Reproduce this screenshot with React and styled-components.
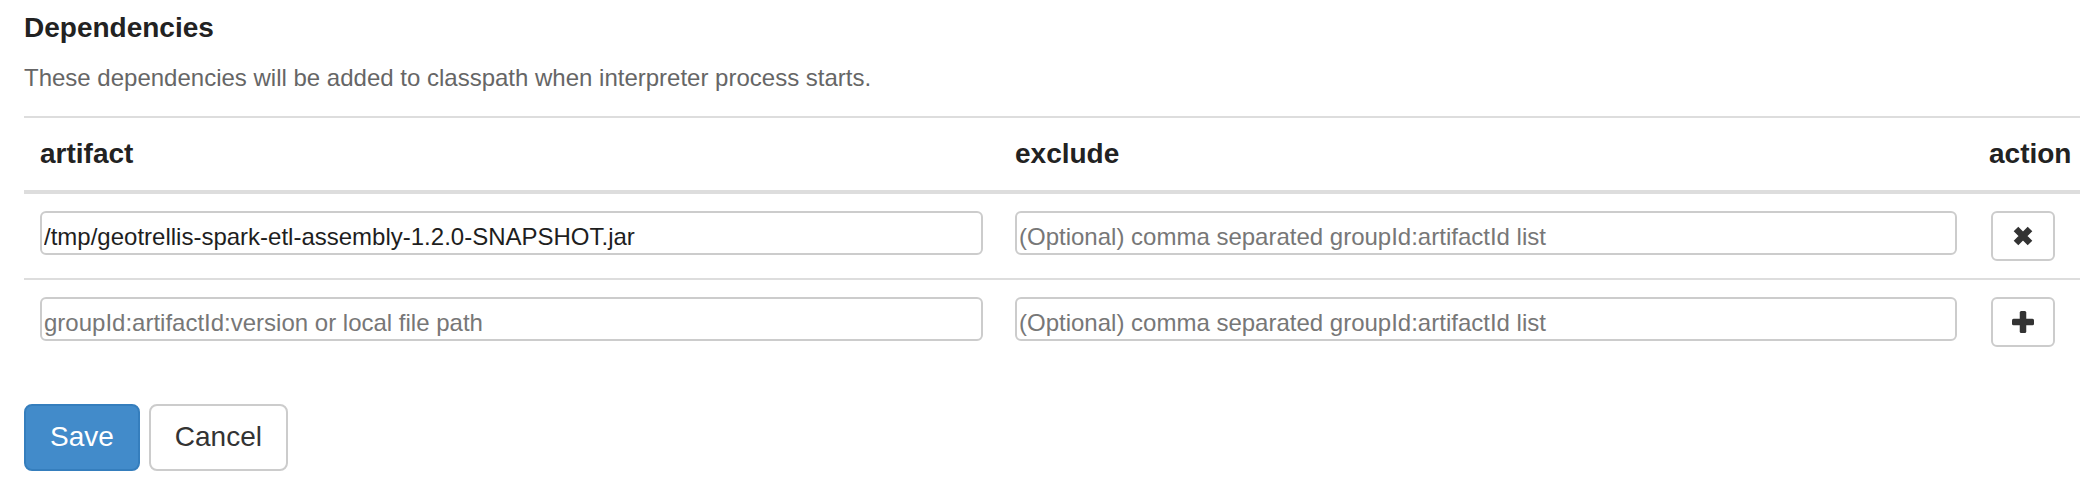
import React from 'react';
import styled, { createGlobalStyle } from 'styled-components';

const GlobalStyle = createGlobalStyle`
    body {
        margin: 0;
        overflow: hidden;
        background: #fff;
        font-family: "Liberation Sans", Helvetica, Arial, sans-serif;
        color: #333;
    }
`;

const Page = styled.div`
    padding: 13px 0 0 24px;
`;

const Title = styled.h5`
    margin: 0;
    font-size: 28px;
    font-weight: bold;
    line-height: 1.1;
    color: #222;
`;

const Description = styled.p`
    margin: 17px 0 0;
    font-size: 24px;
    line-height: 34px;
    color: #666;
`;

const Table = styled.div`
    display: grid;
    grid-template-columns: 975px 974px 114px;
    width: max-content;
    margin-top: 21px;
    border-top: 2px solid #ddd;
`;

const HeadCell = styled.div`
    padding: 16px;
    font-size: 28px;
    font-weight: bold;
    line-height: 40px;
    color: #222;
    border-bottom: 4px solid #ddd;
`;

const Cell = styled.div`
    display: flex;
    align-items: flex-start;
    padding: 17px 16px;
    border-top: ${(p) => (p.first ? 'none' : '2px solid #ddd')};
`;

const Input = styled.input`
    box-sizing: border-box;
    width: 100%;
    height: 44px;
    padding: 9px 2px 0;
    border: 2px solid #ccc;
    border-radius: 6px;
    font-family: inherit;
    font-size: 24px;
    color: #1e1e1e;
    background: #fff;
    outline: none;
    &::placeholder {
        color: #777;
    }
`;

const IconButton = styled.button`
    box-sizing: border-box;
    display: flex;
    align-items: center;
    justify-content: center;
    width: 64px;
    height: 50px;
    margin-left: 2px;
    padding: 0;
    border: 2px solid #ccc;
    border-radius: 6px;
    background: #fff;
    color: #333;
`;

const Footer = styled.div`
    display: flex;
    gap: 9px;
    margin-top: 40px;
`;

const Button = styled.button`
    box-sizing: border-box;
    height: 67px;
    padding: 0 24px;
    border: 2px solid ${(p) => (p.primary ? '#357ebd' : '#ccc')};
    border-radius: 8px;
    background: ${(p) => (p.primary ? '#428bca' : '#fff')};
    color: ${(p) => (p.primary ? '#fff' : '#333')};
    font-family: inherit;
    font-size: 28px;
    line-height: 40px;
`;

const RemoveIcon = () => (
    <svg width="20" height="20" viewBox="0 0 20 20">
        <path d="M3 3 L17 17 M17 3 L3 17" stroke="#333" strokeWidth="6.5" fill="none" />
    </svg>
);

const PlusIcon = () => (
    <svg width="22" height="22" viewBox="0 0 22 22">
        <rect x="0" y="7.75" width="22" height="6.5" rx="1.5" fill="#333" />
        <rect x="7.75" y="0" width="6.5" height="22" rx="1.5" fill="#333" />
    </svg>
);

const deps = [
    { artifact: '/tmp/geotrellis-spark-etl-assembly-1.2.0-SNAPSHOT.jar', exclude: '' },
];

const App = () => {
    return (
        <>
        <GlobalStyle />
        <Page>
            <Title>Dependencies</Title>
            <Description>These dependencies will be added to classpath when interpreter process starts.</Description>
            <Table>
                <HeadCell>artifact</HeadCell>
                <HeadCell>exclude</HeadCell>
                <HeadCell>action</HeadCell>
                {deps.map((dep, i) => (
                    <React.Fragment key={i}>
                        <Cell first={i === 0}>
                            <Input defaultValue={dep.artifact} />
                        </Cell>
                        <Cell first={i === 0}>
                            <Input defaultValue={dep.exclude} placeholder="(Optional) comma separated groupId:artifactId list" />
                        </Cell>
                        <Cell first={i === 0}>
                            <IconButton><RemoveIcon /></IconButton>
                        </Cell>
                    </React.Fragment>
                ))}
                <Cell>
                    <Input placeholder="groupId:artifactId:version or local file path" />
                </Cell>
                <Cell>
                    <Input placeholder="(Optional) comma separated groupId:artifactId list" />
                </Cell>
                <Cell>
                    <IconButton><PlusIcon /></IconButton>
                </Cell>
            </Table>
            <Footer>
                <Button primary>Save</Button>
                <Button>Cancel</Button>
            </Footer>
        </Page>
        </>
    );
};

export default App;
